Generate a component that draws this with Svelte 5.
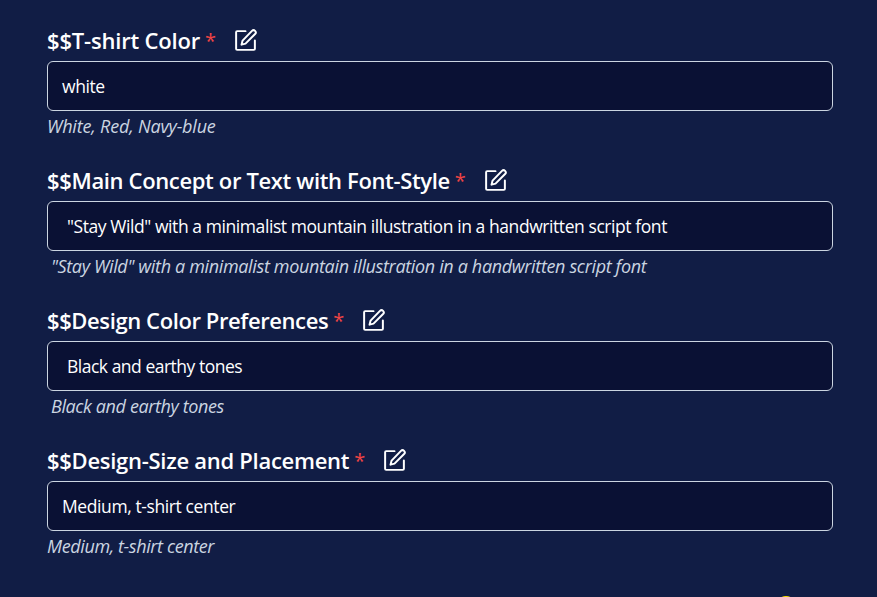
<script>
  const fields = [
    { label: '$$T-shirt Color', value: 'white', hint: 'White, Red, Navy-blue', ls: -0.19, vs: -0.4, hs: -0.18 },
    { label: '$$Main Concept or Text with Font-Style', value: '"Stay Wild" with a minimalist mountain illustration in a handwritten script font', ls: -0.35, vs: -0.425, hs: -0.345, lead: true },
    { label: '$$Design Color Preferences', value: 'Black and earthy tones', ls: -0.4, vs: -0.49, hs: -0.39, lead: true },
    { label: '$$Design-Size and Placement', value: 'Medium, t-shirt center', ls: -0.28, vs: -0.4, hs: -0.39 }
  ];
</script>

<main>
  {#each fields as f}
    <section class:lead={f.lead}>
      <div class="head">
        <span class="label" style:letter-spacing="{f.ls}px">{f.label}</span>
        <span class="star">*</span>
        <svg viewBox="0 0 24 24" aria-hidden="true">
          <path d="M12 3H4a1 1 0 0 0-1 1v16a1 1 0 0 0 1 1h16a1 1 0 0 0 1-1v-8" />
          <path d="M18.2 2.8a2 2 0 0 1 3 3l-9.2 9.2-3.8 1 1-3.9z" />
        </svg>
      </div>
      <div class="input"><span style:letter-spacing="{f.vs}px">{f.value}</span></div>
      <div class="hint"><span style:letter-spacing="{f.hs}px">{f.hint ?? f.value}</span></div>
    </section>
  {/each}
  <i class="dot"></i>
</main>

<style>
  :global(body) { background: #111d45; }
  main {
    position: relative;
    box-sizing: border-box;
    height: 597px;
    padding: 21px 44px 0 47px;
    overflow: hidden;
    background: #111d45;
    color: #fff;
    font-family: "Segoe UI", "Open Sans", "Noto Sans", sans-serif;
    white-space: nowrap;
  }
  section { height: 140px; }
  .head { display: flex; height: 40px; line-height: 38px; }
  .label { font-size: 22px; font-weight: 600; }
  .star { width: 11px; margin-left: 5px; color: #ef4444; font-size: 20px; font-weight: 500; line-height: 39px; }
  svg {
    width: 25px;
    height: 25px;
    margin: 7px 0 0 17px;
    fill: none;
    stroke: #fff;
    stroke-width: 1.9;
    stroke-linecap: round;
    stroke-linejoin: round;
  }
  .input {
    box-sizing: border-box;
    height: 50px;
    padding-left: 14px;
    border: 1px solid #cbd5e1;
    border-radius: 6px;
    background: #0a1134;
    font-size: 17.5px;
    line-height: 49px;
  }
  .hint { height: 32px; color: #cbd5e1; font-size: 18px; font-style: italic; line-height: 30px; }
  .lead .input { padding-left: 19px; }
  .lead .hint { padding-left: 4px; }
  .dot { position: absolute; left: 776px; top: 595.6px; width: 20px; height: 20px; border-radius: 50%; background: #fde000; }
</style>
